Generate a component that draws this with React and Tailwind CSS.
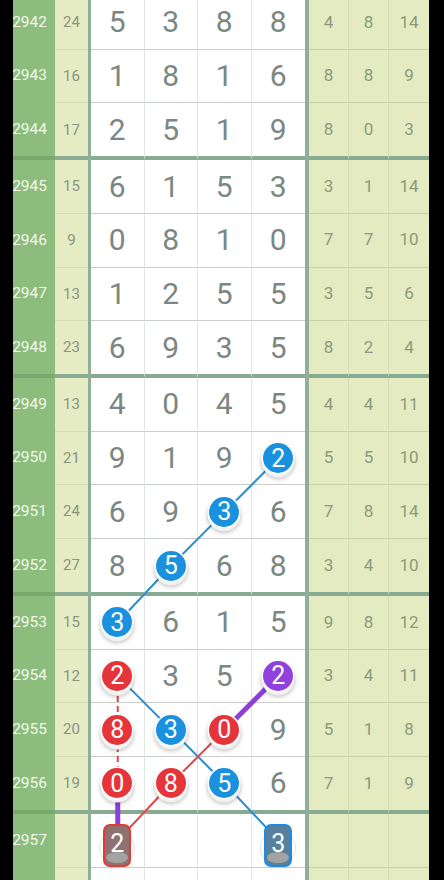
import React from 'react';

// one row per draw: period, sum, four digits, three stats
const ROWS = [
  { n: '2942', s: 24, d: [5, 3, 8, 8], r: [4, 8, 14] },
  { n: '2943', s: 16, d: [1, 8, 1, 6], r: [8, 8, 9] },
  { n: '2944', s: 17, d: [2, 5, 1, 9], r: [8, 0, 3], end: true },
  { n: '2945', s: 15, d: [6, 1, 5, 3], r: [3, 1, 14] },
  { n: '2946', s: 9, d: [0, 8, 1, 0], r: [7, 7, 10] },
  { n: '2947', s: 13, d: [1, 2, 5, 5], r: [3, 5, 6] },
  { n: '2948', s: 23, d: [6, 9, 3, 5], r: [8, 2, 4], end: true },
  { n: '2949', s: 13, d: [4, 0, 4, 5], r: [4, 4, 11] },
  { n: '2950', s: 21, d: [9, 1, 9, 2], r: [5, 5, 10] },
  { n: '2951', s: 24, d: [6, 9, 3, 6], r: [7, 8, 14] },
  { n: '2952', s: 27, d: [8, 5, 6, 8], r: [3, 4, 10], end: true },
  { n: '2953', s: 15, d: [3, 6, 1, 5], r: [9, 8, 12] },
  { n: '2954', s: 12, d: [2, 3, 5, 2], r: [3, 4, 11] },
  { n: '2955', s: 20, d: [8, 3, 0, 9], r: [5, 1, 8] },
  { n: '2956', s: 19, d: [0, 8, 5, 6], r: [7, 1, 9], end: true },
  { n: '2957', s: '', d: ['', '', '', ''], r: ['', '', ''], guess: { 0: 'r', 3: 'b' } },
  { n: '', s: '', d: ['', '', '', ''], r: ['', '', ''] },
];

// highlighted balls: "row-col" -> colour
const BALLS = {
  '8-3': 'b', '9-2': 'b', '10-1': 'b', '11-0': 'b',
  '12-0': 'r', '12-3': 'p',
  '13-0': 'r', '13-1': 'b', '13-2': 'r',
  '14-0': 'r', '14-1': 'r', '14-2': 'b',
};

const BALL_BG = { b: 'bg-[#1991de]', r: 'bg-[#e6343b]', p: 'bg-[#9041de]' };

const H_ROW = 53.67;
const H_END = 56.92;
const TOP = -4;

const cy = (k) => {
  let y = TOP;
  for (let i = 0; i < k; i++) y += ROWS[i].end ? H_END : H_ROW;
  return y + 26.33;
};
const cx = (c) => 91 + 53.5 * c + 26.75;

function Ball({ color, value }) {
  return (
    <div
      className={`relative z-10 w-[30px] h-[30px] rounded-full ${BALL_BG[color]} flex items-center justify-center text-white text-[25px] leading-none shadow-[0_0_0_1.5px_#fff,0_3px_0_1.5px_#f1f1f1,0_4px_5px_1px_rgba(0,0,0,0.35)]`}
    >
      {value}
    </div>
  );
}

function Guess({ color, value }) {
  const red = color === 'r';
  return (
    <div className="relative z-10 flex items-end justify-center w-[36px] h-[44px]">
      {/* faint ghost ball behind the marker */}
      <div className="absolute left-0 right-0 bottom-[2px] h-[34px] rounded-full border border-[#e4e4e4]" />
      <div
        className={`relative w-[28px] h-[43px] rounded-[7px] border-2 overflow-hidden flex justify-center ${
          red ? 'border-[#e53935] bg-[#8e7272]' : 'border-[#1e8ae0] bg-[#56809c]'
        }`}
      >
        <span className="mt-[3px] text-[25px] leading-[30px] text-white">{value}</span>
        <div className="absolute bottom-[2px] left-[1px] right-[1px] h-[11px] rounded-[50%] bg-[#a3a3a3]" />
      </div>
    </div>
  );
}

function Row({ row, k }) {
  const thick = row.end;
  const h = thick ? 'h-[56.92px]' : 'h-[53.67px]';
  const bb = thick ? 'border-b-[4.25px]' : 'border-b';
  return (
    <div className={`flex ${h}`}>
      <div className="w-[13px] bg-black" />
      <div
        className={`w-[42px] bg-[#8cbd7c] ${bb} ${thick ? 'border-[#79a96d]' : 'border-[#8cbd7c]'} flex items-center justify-end pr-[8px] overflow-hidden whitespace-nowrap text-[15.5px] text-[#f3f8ee]`}
      >
        {row.n}
      </div>
      <div
        className={`w-[33px] bg-[#e5ebc3] ${bb} ${thick ? 'border-[#8aad94]' : 'border-[#d6ddb5]'} flex items-center justify-center text-[15px] text-[#8a957f]`}
      >
        {row.s}
      </div>
      <div className="w-[3px] bg-[#8fb097]" />
      {row.d.map((v, c) => {
        const ball = BALLS[`${k}-${c}`];
        const guess = row.guess && row.guess[c];
        return (
          <div
            key={c}
            className={`w-[53.5px] bg-white ${bb} ${thick ? 'border-b-[#86ab92]' : 'border-b-[#c9cec9]'} ${
              c < 3 ? 'border-r border-r-[#e2e6e2]' : ''
            } flex ${guess ? 'items-end' : 'items-center'} justify-center text-[30px] leading-none text-[#7b8782]`}
          >
            {guess ? (
              <Guess color={guess} value={guess === 'r' ? 2 : 3} />
            ) : ball ? (
              <Ball color={ball} value={v} />
            ) : (
              v
            )}
          </div>
        );
      })}
      <div className="w-[4px] bg-[#8fb097]" />
      {row.r.map((v, c) => (
        <div
          key={c}
          className={`w-[40px] bg-[#e4ebc1] ${bb} ${thick ? 'border-b-[#86ab92]' : 'border-b-[#c6d0a8]'} ${
            c < 2 ? 'border-r border-r-[#d3dcb4]' : ''
          } flex items-center justify-center text-[17px] text-[#8b9a7e]`}
        >
          {v}
        </div>
      ))}
      <div className="w-[15px] bg-black" />
    </div>
  );
}

export default function App() {
  const P = (k, c) => `${cx(c)},${cy(k)}`;
  return (
    <div className="relative w-[444px] h-[880px] overflow-hidden bg-black" style={{ fontFamily: 'Roboto, "Noto Sans", sans-serif' }}>
      <div className="flex flex-col -mt-[4px]">
        {ROWS.map((row, k) => (
          <Row key={k} row={row} k={k} />
        ))}
      </div>

      {/* trend lines between highlighted balls */}
      <svg className="absolute inset-0 z-[5] pointer-events-none" width="444" height="880">
        <polyline points={[P(8, 3), P(9, 2), P(10, 1), P(11, 0)].join(' ')} fill="none" stroke="#2a8fcf" strokeWidth="2" />
        <polyline points={[P(12, 0), P(13, 1), P(14, 2), P(15, 3)].join(' ')} fill="none" stroke="#2a8fcf" strokeWidth="2" />
        <polyline points={[P(12, 0), P(13, 0), P(14, 0)].join(' ')} fill="none" stroke="#e0454b" strokeWidth="2" strokeDasharray="6 4" />
        <polyline points={[P(15, 0), P(14, 1), P(13, 2)].join(' ')} fill="none" stroke="#e0454b" strokeWidth="2" />
        <line x1={cx(3)} y1={cy(12)} x2={cx(2)} y2={cy(13)} stroke="#8e3fdb" strokeWidth="5" />
        <line x1={cx(0)} y1={cy(14)} x2={cx(0)} y2={cy(15)} stroke="#8e3fdb" strokeWidth="5" />
      </svg>
    </div>
  );
}
